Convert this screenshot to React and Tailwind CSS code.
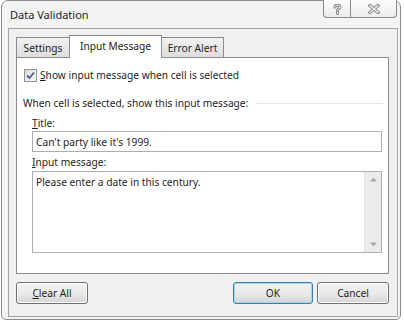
import React from 'react';

function CheckBox() {
  return (
    <div className="flex h-[13px] w-[13px] items-center justify-center border border-[#8e8f8f] bg-gradient-to-br from-[#dcdcdc] to-[#fbfbfb]">
      <svg width="9" height="9" viewBox="0 0 9 9">
        <path d="M1 4.5 L3.5 7 L8 1.5" fill="none" stroke="#4a5f97" strokeWidth="1.8" />
      </svg>
    </div>
  );
}

function Tab({ label, active, width, first }) {
  if (active) {
    return (
      <div className={`relative z-10 -mb-px -ml-px flex h-[23px] items-center justify-center border border-b-0 border-[#898c95] bg-white pb-[2px] ${width}`}>
        {label}
      </div>
    );
  }
  return (
    <div className={`flex h-[20px] items-center justify-center border border-b-0 border-[#898c95] bg-gradient-to-b from-[#f2f2f2] to-[#dedede] ${first ? '' : '-ml-px'} ${width}`}>
      {label}
    </div>
  );
}

function Button({ children, className, isDefault }) {
  return (
    <div
      className={`flex h-[22px] items-center justify-center rounded-[3px] border bg-gradient-to-b from-[#f2f2f2] via-[#ebebeb] to-[#d5d5d5] ${
        isDefault ? 'border-[#3c7fb1] shadow-[inset_0_0_0_1px_#9fd5f6]' : 'border-[#707070] shadow-[inset_0_0_0_1px_#fcfcfc]'
      } ${className}`}
    >
      {children}
    </div>
  );
}

export default function App() {
  return (
    <div className="h-[320px] w-[404px] overflow-hidden bg-white font-['Noto_Sans',sans-serif] text-[10.2px] leading-[16px] text-[#1e1e1e]">
      <div className="ml-px flex h-[320px] w-[400px] flex-col rounded-t-[7px] rounded-b-[5px] border border-[#8d8d8d] bg-[#f3f3f3]">
        {/* Title bar */}
        <div className="flex h-[27px] items-start justify-between">
          <div className="pl-[8px] pt-[6px] text-[11px]">Data Validation</div>
          <div className="mr-[3px] -mt-px flex">
            <div className="flex h-[18px] w-[28px] items-center justify-center rounded-bl-[4px] border border-t-0 border-[#8a8a8a] bg-gradient-to-b from-[#fdfdfd] to-[#ececec]">
              <svg width="9" height="12" viewBox="0 0 9 12">
                <path d="M2 4 C2 1.5 7 1.5 7 4 C7 5.8 4.5 5.8 4.5 7.5 M4.5 9.5 L4.5 10.5" fill="none" stroke="#888" strokeWidth="3" strokeLinecap="round" />
                <path d="M2 4 C2 1.5 7 1.5 7 4 C7 5.8 4.5 5.8 4.5 7.5 M4.5 9.5 L4.5 10.5" fill="none" stroke="#fff" strokeWidth="1" strokeLinecap="round" />
              </svg>
            </div>
            <div className="-ml-px flex h-[18px] w-[47px] items-center justify-center rounded-br-[4px] border border-t-0 border-[#8a8a8a] bg-gradient-to-b from-[#fdfdfd] to-[#ececec]">
              <svg width="12" height="10" viewBox="0 0 12 10">
                <path d="M2 1.5 L10 8.5 M10 1.5 L2 8.5" fill="none" stroke="#888" strokeWidth="3.2" strokeLinecap="square" />
                <path d="M2 1.5 L10 8.5 M10 1.5 L2 8.5" fill="none" stroke="#fff" strokeWidth="1.2" strokeLinecap="square" />
              </svg>
            </div>
          </div>
        </div>

        {/* Client area */}
        <div className="ml-[6px] flex h-[289px] w-[390px] flex-col border border-[#a3a3a3] bg-[#f0f0f0] pl-[7px] pr-[8px] pt-[6px]">
          <div className="flex items-end">
            <Tab label="Settings" width="w-[54px]" first />
            <Tab label="Input Message" width="w-[93px]" active />
            <Tab label="Error Alert" width="w-[63px]" />
          </div>

          <div className="flex h-[217px] flex-col border border-[#898c95] bg-white">
            <div className="mt-[9px] flex items-center pl-[7px]">
              <CheckBox />
              <span className="ml-[3px]">
                <span className="underline">S</span>how input message when cell is selected
              </span>
            </div>

            <div className="mt-[12px] flex items-center pl-[6px]">
              <span>When cell is selected, show this input message:</span>
              <div className="ml-[8px] mr-[5px] h-px flex-1 bg-[#dde4ea]" />
            </div>

            <div className="mt-[4px] pl-[15px]">
              <span className="underline">T</span>itle:
            </div>
            <div className="ml-[15px] flex h-[21px] w-[350px] items-center border border-[#abadb3] px-[3px]">
              Can't party like it's 1999.
            </div>

            <div className="mt-[2px] pl-[15px]">
              <span className="underline">I</span>nput message:
            </div>
            <div className="ml-[15px] mt-px flex h-[82px] w-[350px] border border-[#abadb3]">
              <div className="flex-1 px-[3px] pt-[2px]">Please enter a date in this century.</div>
              <div className="flex w-[17px] flex-col items-center justify-between border-l border-[#e3e3e3] bg-[#ececec] py-[5px]">
                <svg width="7" height="5" viewBox="0 0 7 5">
                  <path d="M0 4.5 L3.5 0.5 L7 4.5 Z" fill="#a8a8a8" />
                </svg>
                <svg width="7" height="5" viewBox="0 0 7 5">
                  <path d="M0 0.5 L3.5 4.5 L7 0.5 Z" fill="#a8a8a8" />
                </svg>
              </div>
            </div>
          </div>

          <div className="mt-[8px] flex items-center">
            <Button className="w-[72px]">
              <span>
                <span className="underline">C</span>lear All
              </span>
            </Button>
            <div className="flex-1" />
            <Button className="w-[80px]" isDefault>
              OK
            </Button>
            <Button className="ml-[4px] w-[72px]">Cancel</Button>
          </div>
        </div>
      </div>
    </div>
  );
}
